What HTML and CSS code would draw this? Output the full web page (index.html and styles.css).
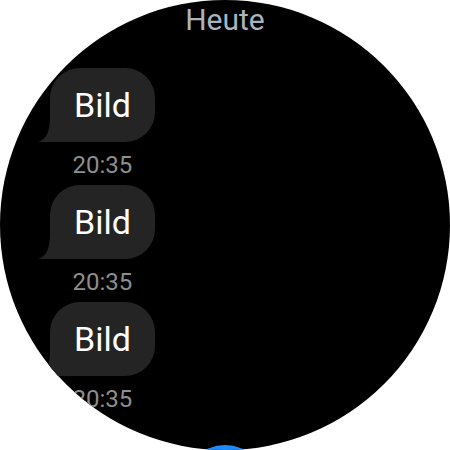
FILE: index.html
```html
<!DOCTYPE html>
<html lang="de">
<head>
<meta charset="utf-8">
<link rel="stylesheet" href="styles.css">
</head>
<body>
<div class="screen">
  <div class="header">Heute</div>
  <div class="list">
    <div class="msg">
      <div class="bubble">Bild<svg class="tail" width="24" height="26" viewBox="0 0 24 26"><path d="M12 0 C12 15 9 23 0 26 L24 26 L24 0 Z"/></svg></div>
      <div class="time">20:35</div>
    </div>
    <div class="msg">
      <div class="bubble">Bild<svg class="tail" width="24" height="26" viewBox="0 0 24 26"><path d="M12 0 C12 15 9 23 0 26 L24 26 L24 0 Z"/></svg></div>
      <div class="time">20:35</div>
    </div>
    <div class="msg">
      <div class="bubble">Bild<svg class="tail" width="24" height="26" viewBox="0 0 24 26"><path d="M12 0 C12 15 9 23 0 26 L24 26 L24 0 Z"/></svg></div>
      <div class="time">20:35</div>
    </div>
  </div>
  <div class="fab"></div>
</div>
</body>
</html>
```

FILE: styles.css
```css
html, body {
  margin: 0;
  padding: 0;
  background: #ffffff;
}
body {
  width: 450px;
  height: 450px;
  overflow: hidden;
  font-family: Roboto, "Liberation Sans", sans-serif;
}
.screen {
  position: relative;
  width: 450px;
  height: 450px;
  border-radius: 50%;
  background: #000000;
  overflow: hidden;
}
.header {
  padding-top: 2px;
  height: 36px;
  line-height: 36px;
  font-size: 30px;
  color: #a9b4bf;
  text-align: center;
}
.list {
  display: flex;
  flex-direction: column;
  align-items: flex-start;
  padding-top: 30px;
  padding-left: 50px;
  gap: 6px;
}
.msg {
  display: flex;
  flex-direction: column;
  align-items: center;
}
.bubble {
  position: relative;
  height: 74px;
  line-height: 74px;
  padding: 0 24px;
  font-size: 34px;
  color: #ffffff;
  background: #242424;
  border-radius: 30px 30px 30px 0;
}
.tail {
  position: absolute;
  left: -12px;
  bottom: 0;
  fill: #242424;
  display: block;
}
.time {
  margin-top: 9px;
  height: 28px;
  line-height: 28px;
  font-size: 24px;
  color: #8e8e8e;
}
.fab {
  position: absolute;
  left: 183px;
  top: 445px;
  width: 84px;
  height: 84px;
  border-radius: 50%;
  background: #1e8cff;
}
```
